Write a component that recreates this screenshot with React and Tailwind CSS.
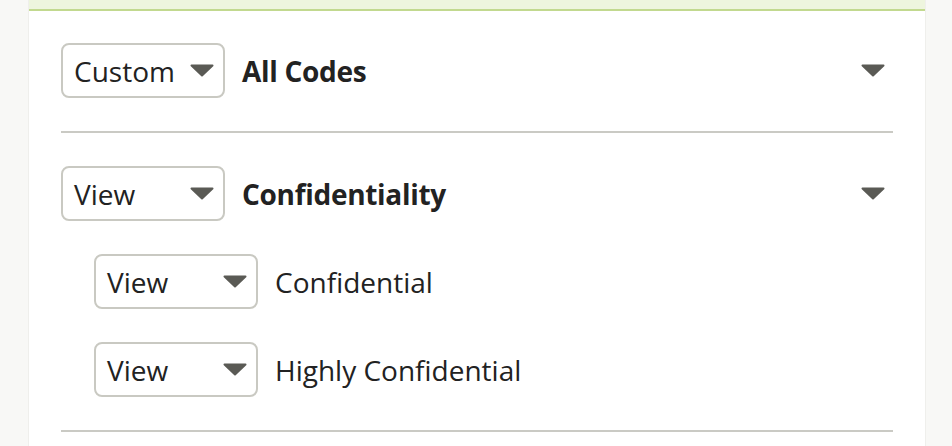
import React from "react";

function Caret({ className = "" }) {
  return (
    <svg width="24" height="13" viewBox="0 0 24 13" className={className}>
      <polygon
        points="1.5,1.5 22.5,1.5 12,11.5"
        fill="#5a5a55"
        stroke="#5a5a55"
        strokeWidth="2"
        strokeLinejoin="round"
      />
    </svg>
  );
}

function Select({ value }) {
  return (
    <div className="flex h-[55px] w-[164px] shrink-0 items-center justify-between rounded-[8px] border-2 border-[#c9c9c2] bg-white pl-[11px] pr-[9px]">
      <span className="text-[28px] leading-none text-[#222]">{value}</span>
      <Caret />
    </div>
  );
}

function Row({ value, label, bold, sub, caret }) {
  return (
    <div className={`flex items-center ${sub ? "pl-[33px]" : ""}`}>
      <Select value={value} />
      <span
        className={`ml-[17px] flex-1 text-[28px] leading-none text-[#222] ${
          bold ? "font-bold tracking-[-0.3px]" : ""
        }`}
      >
        {label}
      </span>
      {caret && <Caret className="mr-[8px]" />}
    </div>
  );
}

export default function App() {
  return (
    <div
      className="flex h-[446px] w-[952px] bg-[#f8f8f6]"
      style={{ fontFamily: '"Open Sans", "Liberation Sans", sans-serif' }}
    >
      <div className="w-[29px] shrink-0 border-r border-[#efefec]" />
      <div className="flex w-[896px] shrink-0 flex-col bg-white">
        <div className="h-[11px] border-b-2 border-[#c2d98f] bg-[#eef5de]" />
        <div className="flex flex-col px-[32px] pt-[32px]">
          <Row value="Custom" label="All Codes" bold caret />
          <div className="my-[33px] h-[2px] bg-[#cacac4]" />
          <div className="flex flex-col gap-[33px]">
            <Row value="View" label="Confidentiality" bold caret />
            <Row value="View" label="Confidential" sub />
            <Row value="View" label="Highly Confidential" sub />
          </div>
          <div className="mt-[33px] h-[2px] bg-[#cacac4]" />
        </div>
      </div>
      <div className="flex-1 border-l border-[#efefec]" />
    </div>
  );
}
